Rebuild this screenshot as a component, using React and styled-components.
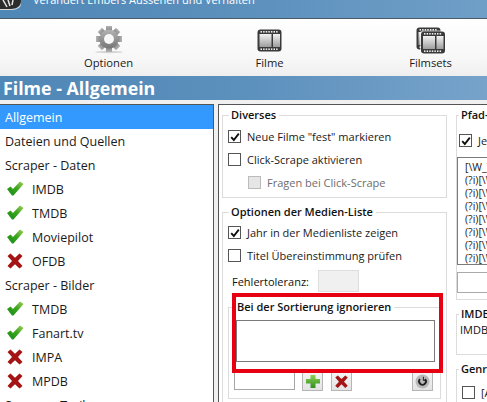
import React from 'react';
import styled, { createGlobalStyle } from 'styled-components';

const Global = createGlobalStyle`
  html, body { margin: 0; padding: 0; background: #f0f0f0; overflow: hidden; }
  #root { width: 487px; height: 402px; overflow: hidden; }
  * { box-sizing: border-box; }
`;
const Page = styled.div`
  position: relative; width: 487px; height: 402px; overflow: hidden; background: #f0f0f0;
  font-family: "Open Sans", "Noto Sans", sans-serif; font-size: 11px; color: #111;
  display: flex; flex-direction: column;
`;
const Banner = styled.header`
  height: 19px; flex: none; overflow: hidden; display: flex; align-items: flex-end; gap: 12px;
  background: linear-gradient(90deg, #4f87b6 0%, #5c90bd 50%, #6f9fc7 100%);
  border-bottom: 1px solid #4a5a68; color: #fff; font-size: 11px; line-height: 16px;
`;
const BannerText = styled.span` margin-bottom: 10px; white-space: nowrap; `;
const Logo = styled.svg` flex: none; `;
const Toolbar = styled.nav`
  height: 57px; flex: none; display: flex; padding-left: 28px;
  background: linear-gradient(180deg, #fff 0%, #f7f7f7 70%, #efefef 100%);
`;
const Tool = styled.div`
  width: 161px; flex: none; display: flex; flex-direction: column; align-items: center; padding-top: 5px;
`;
const ToolIcon = styled.div` height: 30px; display: flex; align-items: flex-end; justify-content: center; `;
const ToolLabel = styled.span` margin-top: 1px; line-height: 16px; font-size: 11.2px; color: #1a1a1a; `;
const TitleBar = styled.h1`
  height: 24px; flex: none; margin: 0; padding-left: 3px; color: #fff; font-size: 17.8px; font-weight: 700; line-height: 24px;
  background: linear-gradient(90deg, #4f87b6 0%, #5c90bd 50%, #77a3ca 100%);
`;
const Body = styled.main` flex: 1; min-height: 0; display: flex; gap: 4px; padding-top: 4px; `;
const SideList = styled.ul`
  width: 214px; flex: none; margin: 0; padding: 0; list-style: none; background: #fff; overflow: hidden;
  border-top: 1px solid #555; border-right: 1px solid #555;
`;
const SideItem = styled.li`
  height: 24px; flex: none; display: flex; align-items: center; padding-left: ${p => (p.$icon ? '6px' : '5px')}; gap: 8px;
  font-size: 12.5px;
  background: ${p => (p.$active ? '#3399ff' : 'transparent')}; color: ${p => (p.$active ? '#fff' : '#1a1a1a')};
  white-space: nowrap;
`;
const Content = styled.section`
  flex: 1; min-width: 0; background: #fff; border-top: 1px solid #555; border-left: 1px solid #555;
  padding: 2px 0 0 3px; display: flex; gap: 9px; overflow: hidden;
`;
const Column = styled.div` width: 225px; flex: none; display: flex; flex-direction: column; gap: 6px; `;
const Group = styled.fieldset`
  margin: 0; padding: ${p => p.$pad || '0'}; border: 1px solid #dcdcdc; min-width: 0;
  height: ${p => p.$h}px; flex: none;
`;
const Legend = styled.legend`
  margin-left: ${p => p.$ml ?? 1}px; padding: 0 3px 0 2px; font-weight: 600; font-size: 11px; line-height: 16px; color: #111; white-space: nowrap;
`;
const CheckRow = styled.label`
  height: 23px; display: flex; align-items: center; gap: 6px; margin-left: ${p => p.$indent || 0}px; white-space: nowrap;
  color: ${p => (p.$disabled ? '#6d6d6d' : '#1a1a1a')};
`;
const Box = styled.span`
  width: 13px; height: 13px; flex: none; display: flex; align-items: center; justify-content: center;
  border: 1px solid ${p => (p.$disabled ? '#bbb' : '#555')}; background: ${p => (p.$disabled ? '#e6e6e6' : '#fff')};
`;
const ToleranceRow = styled.div` display: grid; grid-template-columns: 86px 41px; align-items: center; height: 22px; margin: 3px 0 7px 4px; `;
const ToleranceInput = styled.div` height: 22px; background: #f0f0f0; border: 1px solid #dedede; `;
const SortList = styled.div` height: 42px; margin: 5px 0 0 7px; width: 199px; border: 1px solid #7a7a7a; background: #fff; `;
const ControlRow = styled.div` display: flex; align-items: flex-start; margin: 10px 0 0 5px; height: 19px; `;
const SmallInput = styled.div` width: 61px; height: 18px; border: 1px solid #a5a5a5; background: #fff; `;
const IconButton = styled.button`
  width: 21px; height: 19px; padding: 0; margin-left: ${p => p.$ml}px; display: flex; align-items: center; justify-content: center;
  border: 1px solid #b5b5b5; background: linear-gradient(180deg, #f4f4f4, #e3e3e3);
`;
const RedMark = styled.div`
  position: absolute; left: 232px; top: 293px; width: 211px; height: 80px; border: 4px solid #e60012; pointer-events: none;
`;
const PatternList = styled.div`
  height: 108px; width: 120px; margin-top: 5px; border: 1px solid #7a7a7a; padding: 3px 0 0 7px;
  font-size: 10.5px; line-height: 13px; white-space: nowrap; overflow: hidden; color: #222;
`;
const PathInput = styled.div` height: 21px; width: 120px; margin-top: 7px; border: 1px solid #aaa; `;
const PlainText = styled.div` margin-left: 3px; line-height: 16px; white-space: nowrap; `;
const GenreRow = styled.div` margin: 4px 0 0 5px; `;

const Check = () => (
  <svg width="10" height="10" viewBox="0 0 10 10"><path d="M1.2 5.2 L3.8 8 L8.8 1.6" fill="none" stroke="#111" strokeWidth="1.9" /></svg>
);
const Gear = () => {
  const teeth = [0, 45, 90, 135, 180, 225, 270, 315];
  return (
    <svg width="30" height="28" viewBox="0 0 30 28">
      <defs>
        <linearGradient id="gg" x1="0" y1="0" x2="0" y2="1"><stop offset="0" stopColor="#b4b4b4" /><stop offset="1" stopColor="#767676" /></linearGradient>
      </defs>
      <ellipse cx="15" cy="26" rx="14" ry="1.2" fill="#d5d5d5" />
      <g transform="translate(15 13)">
        {teeth.map(a => <rect key={a} x="-3" y="-13" width="6" height="6" fill="url(#gg)" transform={`rotate(${a})`} />)}
        <circle r="9.5" fill="url(#gg)" />
        <circle r="5" fill="#f8f8f8" />
      </g>
    </svg>
  );
};
const filmHoles = y => [0, 1, 2, 3, 4, 5, 6].map(i => <rect key={i} x={3.5 + i * 2.6} y={y} width="1.5" height="1.6" fill="#eee" />);
const FilmFrame = ({ id }) => (
  <>
    <rect x="0.5" y="0.5" width="24" height="22" rx="3" fill="#3a3a3a" />
    <rect x="2.5" y="5" width="12" height="13" fill={`url(#${id})`} />
    <rect x="16" y="5" width="7" height="13" fill={`url(#${id})`} />
    {filmHoles(2)}
    {filmHoles(19.4)}
  </>
);
const Film = () => (
  <svg width="26" height="25" viewBox="0 0 26 25">
    <defs><linearGradient id="fg" x1="0" y1="0" x2="0" y2="1"><stop offset="0" stopColor="#f2f2f2" /><stop offset="1" stopColor="#9d9d9d" /></linearGradient></defs>
    <FilmFrame id="fg" />
  </svg>
);
const Films = () => (
  <svg width="30" height="27" viewBox="0 0 30 27">
    <defs><linearGradient id="fs" x1="0" y1="0" x2="0" y2="1"><stop offset="0" stopColor="#f2f2f2" /><stop offset="1" stopColor="#9d9d9d" /></linearGradient></defs>
    <FilmFrame id="fs" />
    <g transform="translate(4.5 4)"><rect x="-0.5" y="-0.5" width="26" height="24" rx="3" fill="#fff" opacity=".6" /><FilmFrame id="fs" /></g>
  </svg>
);
const Ok = () => (
  <svg width="18" height="16" viewBox="0 0 18 16">
    <defs><linearGradient id="ok" x1="0" y1="1" x2="1" y2="0"><stop offset="0" stopColor="#138a16" /><stop offset=".55" stopColor="#3da51f" /><stop offset="1" stopColor="#a6cf5f" /></linearGradient></defs>
    <path d="M1 8 L4.5 5.5 L7 8 L14 .5 L17.5 3 L7.5 14.5 L6 14.5 Z" fill="url(#ok)" />
  </svg>
);
const No = ({ s = 18 }) => (
  <svg width={s} height={s * 16 / 18} viewBox="0 0 18 16">
    <path d="M1.5 3 L4.5 .5 L9 4.8 L13.5 .5 L16.5 3 L12 8 L16.5 13 L13.5 15.5 L9 11.2 L4.5 15.5 L1.5 13 L6 8 Z" fill="#a51414" />
  </svg>
);
const Plus = () => (
  <svg width="16" height="15" viewBox="0 0 16 15">
    <defs><linearGradient id="pl" x1="0" y1="0" x2="0" y2="1"><stop offset="0" stopColor="#8ed052" /><stop offset="1" stopColor="#2e8f22" /></linearGradient></defs>
    <path d="M5.5 1 H10.5 V5 H15 V9.5 H10.5 V14 H5.5 V9.5 H1 V5 H5.5 Z" fill="url(#pl)" />
  </svg>
);
const Reload = () => (
  <svg width="15" height="15" viewBox="0 0 15 15">
    <circle cx="7.5" cy="7.5" r="7" fill="#b9b9b9" />
    <path d="M5 5 A3.4 3.4 0 1 0 10 5" fill="none" stroke="#222" strokeWidth="1.8" />
    <path d="M8.4 2.8 V6.4 H11.6" fill="none" stroke="#222" strokeWidth="1" />
  </svg>
);
const LogoMark = () => (
  <Logo width="21" height="18" viewBox="0 0 21 18">
    <path d="M0 0 H21 C21 6 17 9 10 9 H0 Z" fill="#2c2c2c" />
    <path d="M0 9 H12 C17 9 21 6 21 2 V4 C21 8 16 10 10 10 H0 Z" fill="#d9d9d9" />
    <path d="M3 0 L7 7 M8 0 L10 6 M13 0 L12 5" stroke="#e6e6e6" strokeWidth="1.5" />
  </Logo>
);

const rows = [
  ['Allgemein', null, true], ['Dateien und Quellen'], ['Scraper - Daten'],
  ['IMDB', 'ok'], ['TMDB', 'ok'], ['Moviepilot', 'ok'], ['OFDB', 'no'],
  ['Scraper - Bilder'], ['TMDB', 'ok'], ['Fanart.tv', 'ok'], ['IMPA', 'no'], ['MPDB', 'no'], ['Scraper - Trailer'],
];
const patterns = ['[\\W_]', '(?i)[\\W_]the', '(?i)[\\W_]der', '(?i)[\\W_]die', '(?i)[\\W_]das', '(?i)[\\W_]ein', '(?i)[\\W_]eine', '(?i)[\\W_]a'];

export default function App() {
  return (
    <Page>
      <Global />
      <Banner>
        <LogoMark />
        <BannerText>Verändert Embers Aussehen und Verhalten</BannerText>
      </Banner>
      <Toolbar>
        <Tool><ToolIcon><Gear /></ToolIcon><ToolLabel>Optionen</ToolLabel></Tool>
        <Tool><ToolIcon><Film /></ToolIcon><ToolLabel>Filme</ToolLabel></Tool>
        <Tool><ToolIcon><Films /></ToolIcon><ToolLabel>Filmsets</ToolLabel></Tool>
      </Toolbar>
      <TitleBar>Filme - Allgemein</TitleBar>
      <Body>
        <SideList>
          {rows.map(([t, icon, active], i) => (
            <SideItem key={i} $icon={!!icon} $active={active}>
              {icon === 'ok' && <Ok />}
              {icon === 'no' && <No />}
              {t}
            </SideItem>
          ))}
        </SideList>
        <Content>
          <Column>
            <Group $h={91} $pad="2px 0 0 5px">
              <Legend>Diverses</Legend>
              <CheckRow><Box><Check /></Box>Neue Filme "fest" markieren</CheckRow>
              <CheckRow><Box />Click-Scrape aktivieren</CheckRow>
              <CheckRow $indent={20} $disabled><Box $disabled />Fragen bei Click-Scrape</CheckRow>
            </Group>
            <Group $h={200} $pad="1px 5px 0 5px">
              <Legend>Optionen der Medien-Liste</Legend>
              <CheckRow><Box><Check /></Box>Jahr in der Medienliste zeigen</CheckRow>
              <CheckRow><Box />Titel Übereinstimmung prüfen</CheckRow>
              <ToleranceRow><span>Fehlertoleranz:</span><ToleranceInput /></ToleranceRow>
              <Group $h={100}>
                <Legend $ml={6}>Bei der Sortierung ignorieren</Legend>
                <SortList />
                <ControlRow>
                  <SmallInput />
                  <IconButton $ml={7}><Plus /></IconButton>
                  <IconButton $ml={8}><No s={15} /></IconButton>
                  <IconButton $ml={60}><Reload /></IconButton>
                </ControlRow>
              </Group>
            </Group>
          </Column>
          <Column>
            <Group $h={193} $pad="6px 0 0 0">
              <Legend $ml={2}>Pfad-Erkennung</Legend>
              <CheckRow $indent={2}><Box><Check /></Box>Jedes Verzeichnis</CheckRow>
              <PatternList>{patterns.map(p => <div key={p}>{p}</div>)}</PatternList>
              <PathInput />
            </Group>
            <Group $h={49}>
              <Legend $ml={2}>IMDB</Legend>
              <PlainText>IMDB-Seite</PlainText>
            </Group>
            <Group $h={50}>
              <Legend $ml={2}>Genres</Legend>
              <GenreRow><CheckRow><Box />[Alle]</CheckRow></GenreRow>
            </Group>
          </Column>
        </Content>
      </Body>
      <RedMark />
    </Page>
  );
}
